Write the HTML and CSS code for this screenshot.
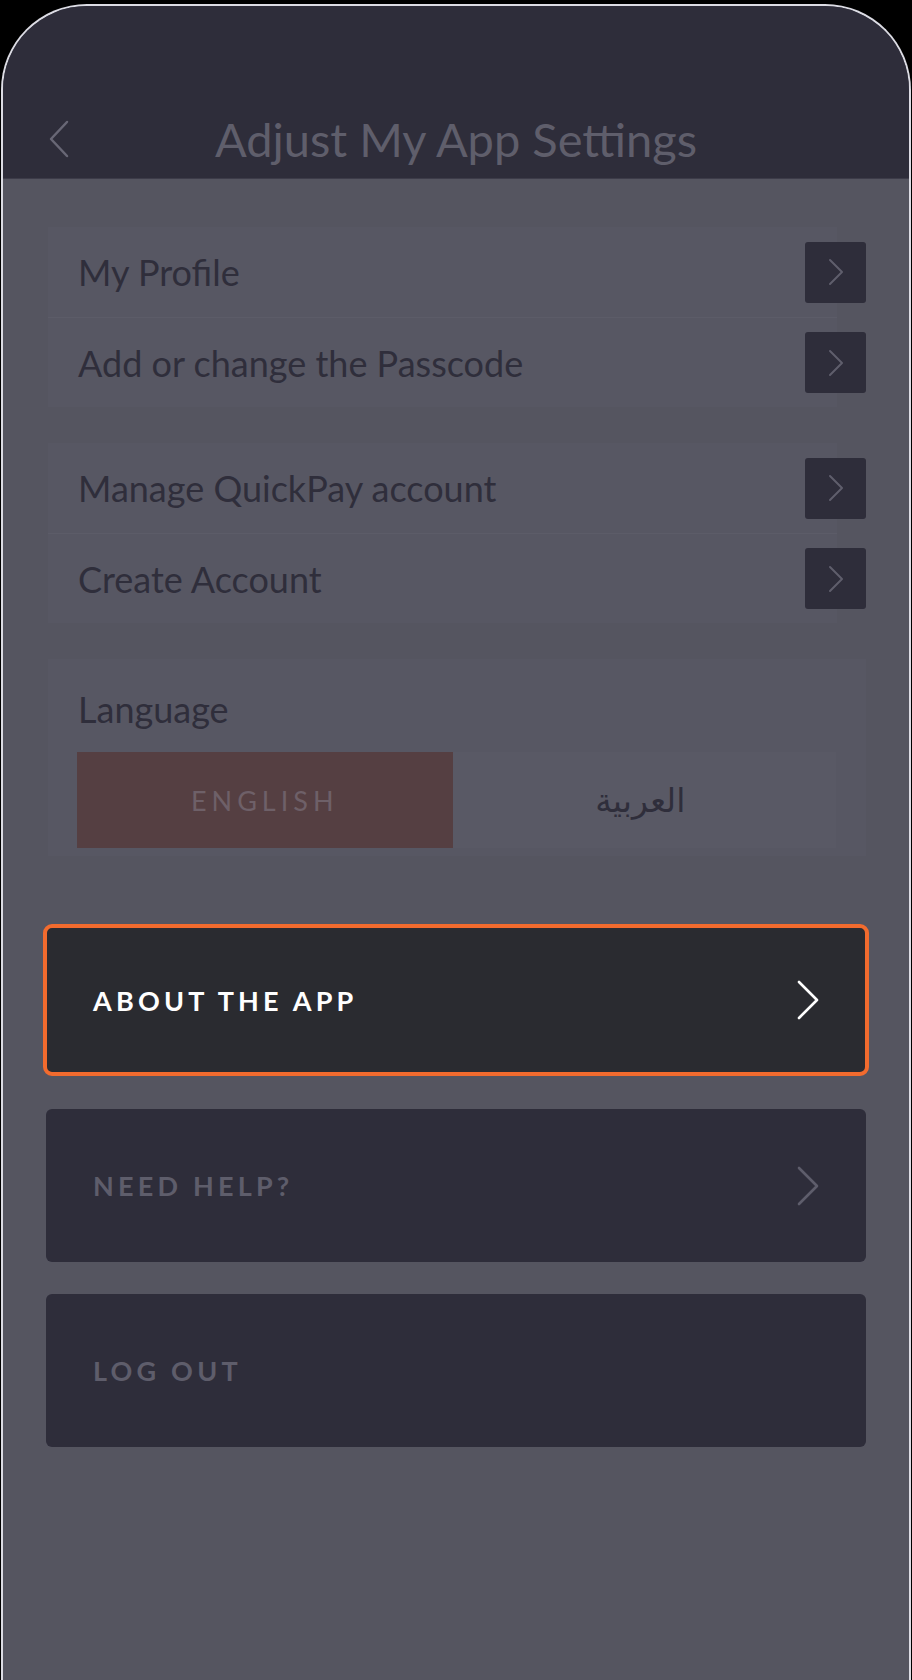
FILE: index.html
```html
<!DOCTYPE html>
<html lang="en">
<head>
  <meta charset="UTF-8">
  <meta name="viewport" content="width=device-width, initial-scale=1.0">
  <title>Adjust My App Settings</title>
  <link rel="stylesheet" href="styles.css">
</head>
<body>
  <div class="phone">
    <header class="header">
      <a href="#" class="back" aria-label="Back">
        <svg width="22" height="38" viewBox="0 0 22 38"><path d="M19 2 L3 19 L19 36" fill="none" stroke="currentColor" stroke-width="2.5" stroke-linecap="round" stroke-linejoin="round"/></svg>
      </a>
      <h1 class="title">Adjust My App Settings</h1>
      <span class="spacer"></span>
    </header>

    <main class="content">
      <div class="group">
        <div class="row">
          <span>My Profile</span>
          <a href="#" class="go"><svg width="16" height="28" viewBox="0 0 16 28"><path d="M2 2 L14 14 L2 26" fill="none" stroke="currentColor" stroke-width="2" stroke-linecap="round" stroke-linejoin="round"/></svg></a>
        </div>
        <div class="row">
          <span>Add or change the Passcode</span>
          <a href="#" class="go"><svg width="16" height="28" viewBox="0 0 16 28"><path d="M2 2 L14 14 L2 26" fill="none" stroke="currentColor" stroke-width="2" stroke-linecap="round" stroke-linejoin="round"/></svg></a>
        </div>
      </div>

      <div class="group">
        <div class="row">
          <span>Manage QuickPay account</span>
          <a href="#" class="go"><svg width="16" height="28" viewBox="0 0 16 28"><path d="M2 2 L14 14 L2 26" fill="none" stroke="currentColor" stroke-width="2" stroke-linecap="round" stroke-linejoin="round"/></svg></a>
        </div>
        <div class="row">
          <span>Create Account</span>
          <a href="#" class="go"><svg width="16" height="28" viewBox="0 0 16 28"><path d="M2 2 L14 14 L2 26" fill="none" stroke="currentColor" stroke-width="2" stroke-linecap="round" stroke-linejoin="round"/></svg></a>
        </div>
      </div>

      <div class="language">
        <div class="label">Language</div>
        <div class="segments">
          <a href="#" class="seg active">ENGLISH</a>
          <a href="#" class="seg arabic" lang="ar" dir="rtl">العربية</a>
        </div>
      </div>

      <a href="#" class="action about">
        <span>ABOUT THE APP</span>
        <svg width="24" height="40" viewBox="0 0 24 40"><path d="M3 2 L21 20 L3 38" fill="none" stroke="currentColor" stroke-width="2.6" stroke-linecap="round" stroke-linejoin="round"/></svg>
      </a>

      <a href="#" class="action">
        <span>NEED HELP?</span>
        <svg width="24" height="40" viewBox="0 0 24 40"><path d="M3 2 L21 20 L3 38" fill="none" stroke="currentColor" stroke-width="2.6" stroke-linecap="round" stroke-linejoin="round"/></svg>
      </a>

      <a href="#" class="action">
        <span>LOG OUT</span>
      </a>
    </main>
  </div>
</body>
</html>
```

FILE: styles.css
```css
body {
  margin: 0;
  background: #000;
  font-family: Lato, "Noto Sans", sans-serif;
}

a {
  text-decoration: none;
  color: inherit;
}

.phone {
  margin: 4px 1px 0;
  height: 1676px;
  box-sizing: border-box;
  border: 2px solid #dcdce4;
  border-bottom: none;
  border-radius: 86px 86px 0 0;
  overflow: hidden;
  background: #555560;
  display: flex;
  flex-direction: column;
}

/* Header */
.header {
  background: #2e2d3a;
  border-bottom: 1px solid #3d3c49;
  padding: 94px 45px 0;
  height: 78px;
  display: flex;
  align-items: center;
}

.back {
  width: 22px;
  height: 38px;
  color: #686775;
}

.spacer {
  width: 22px;
}

.title {
  flex: 1;
  margin: 0;
  text-align: center;
  font-size: 47px;
  font-weight: 400;
  color: #5f5e6b;
}

/* Content */
.content {
  flex: 1;
  padding: 48px 43px 0 45px;
  display: flex;
  flex-direction: column;
}

.group {
  background: #575763;
  margin-right: 29px;
  margin-bottom: 36px;
}

.row {
  height: 90px;
  display: flex;
  align-items: center;
  padding-left: 30px;
  font-size: 36px;
  color: #2f2e3b;
}

.row + .row {
  border-top: 1px solid #5c5c68;
  height: 89px;
}

.go {
  margin-left: auto;
  margin-right: -29px;
  width: 61px;
  height: 61px;
  border-radius: 3px;
  background: #2e2d3a;
  color: #5f5e6c;
  display: flex;
  align-items: center;
  justify-content: center;
}

/* Language */
.language {
  background: #575763;
  padding: 30px 30px 8px 29px;
}

.label {
  line-height: 40px;
  font-size: 36px;
  color: #2f2e3b;
  padding-left: 1px;
}

.segments {
  margin-top: 23px;
  height: 96px;
  display: flex;
}

.seg {
  flex: 1;
  display: flex;
  align-items: center;
  justify-content: center;
  background: #595965;
  color: #2f2e3b;
  font-size: 33px;
}

.seg.active {
  background: #553f42;
  color: #6e6068;
  font-size: 27px;
  letter-spacing: 5px;
}

.seg.arabic {
  font-family: "DejaVu Sans", "Noto Sans", sans-serif;
  padding-right: 8px;
}

/* Actions */
.action {
  margin: 0 0 32px -2px;
  height: 153px;
  box-sizing: border-box;
  border-radius: 6px;
  background: #2e2d3a;
  color: #5e5d6b;
  padding: 0 46px 0 47px;
  display: flex;
  align-items: center;
  justify-content: space-between;
  font-size: 27px;
  font-weight: 700;
  letter-spacing: 4.2px;
}

.action.about {
  margin: 68px -3px 33px -5px;
  height: 152px;
  border: 4px solid #f26b2e;
  border-radius: 9px;
  background: #2a2b30;
  color: #fff;
  padding: 0 45px 0 46px;
}
```
